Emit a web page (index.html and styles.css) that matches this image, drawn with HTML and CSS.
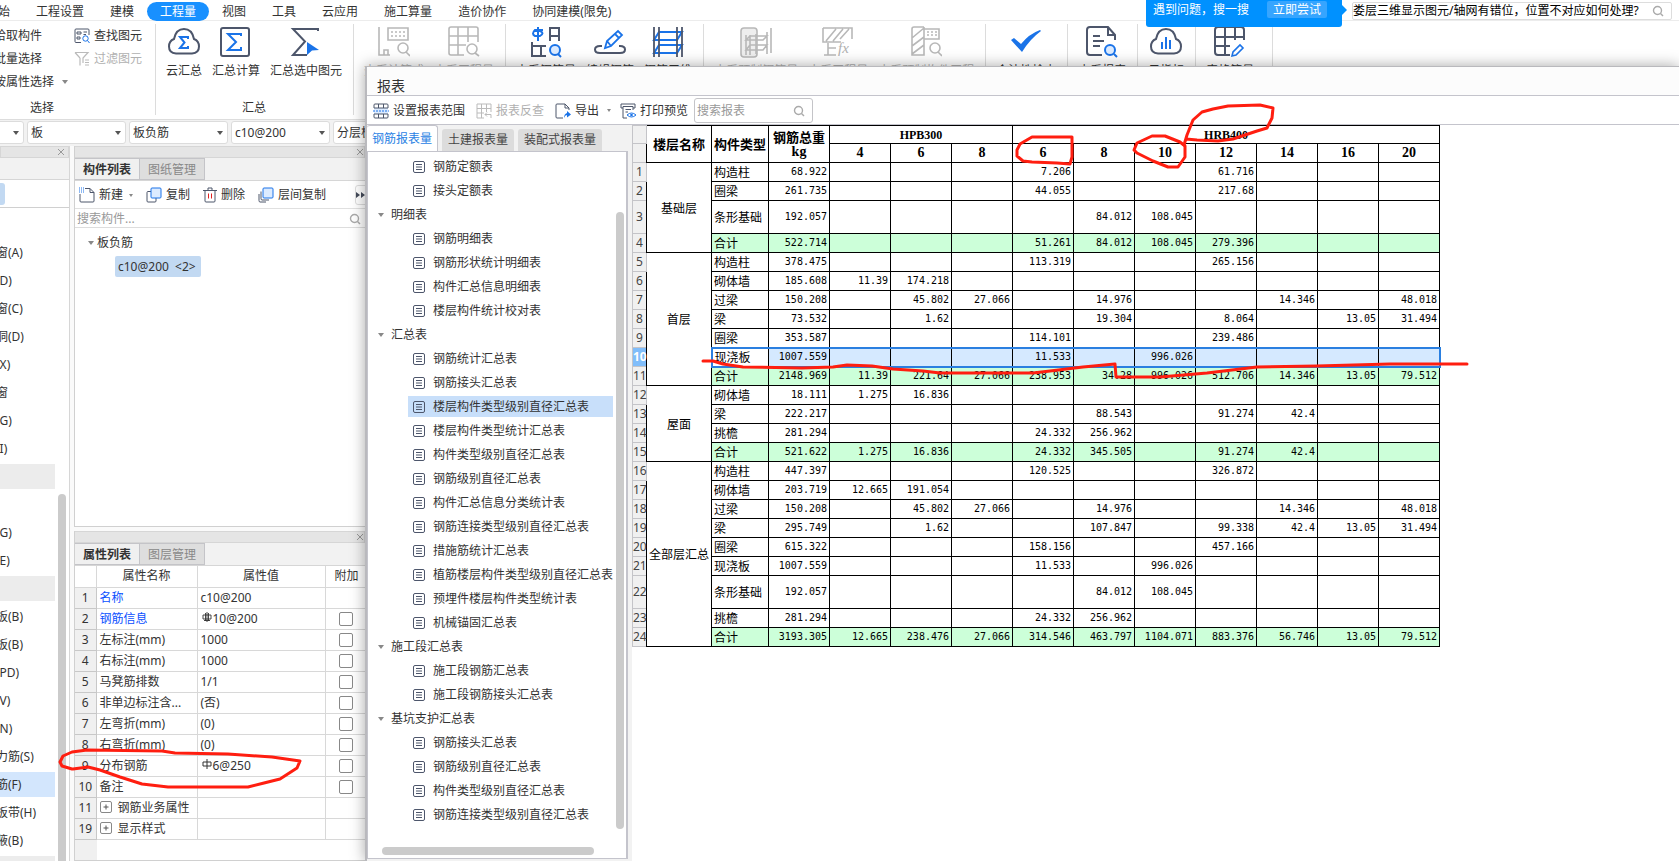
FILE: index.html
```
<!DOCTYPE html>
<html lang="zh-CN">
<head>
<meta charset="utf-8">
<title>报表</title>
<link rel="stylesheet" href="styles.css">
</head>
<body>
<svg class="defs" aria-hidden="true">
  <symbol id="i-doc" viewBox="0 0 12 12"><rect x=".5" y=".5" width="11" height="11" rx="1.5" fill="none" stroke="#4d566b"/><path d="M3 3.5h6M3 6h6M3 8.5h6" stroke="#4d566b" fill="none"/></symbol>
  <symbol id="i-search" viewBox="0 0 12 12"><circle cx="5.5" cy="5.5" r="4" fill="none" stroke="#aaa" stroke-width="1.4"/><path d="M8.5 8.5l2.5 2.5" stroke="#aaa" stroke-width="1.4"/></symbol>
  <symbol id="i-close" viewBox="0 0 8 8"><path d="M1 1l6 6M7 1L1 7" stroke="#999" fill="none"/></symbol>
  <symbol id="i-plus" viewBox="0 0 12 12"><rect x=".5" y=".5" width="11" height="11" rx="1.5" fill="#fff" stroke="#888"/><path d="M3.500 6h5M6 3.500v5" stroke="#555" fill="none"/></symbol>
</svg>
<div class="app">
  <header class="topbar">
    <nav class="menu">
      <button>开始</button><button>工程设置</button><button>建模</button><button class="active">工程量</button><button>视图</button><button>工具</button><button>云应用</button><button>施工算量</button><button>造价协作</button><button>协同建模(限免)</button>
    </nav>
    <div class="help">
      <div class="tip"><span>遇到问题，搜一搜</span><button>立即尝试</button></div>
      <label class="ask"><input type="text" aria-label="搜索问题" value="娄层三维显示图元/轴网有错位，位置不对应如何处理?"><svg width="12" height="12"><use href="#i-search"/></svg></label>
    </div>
  </header>

  <section class="ribbon">
    <div class="group select-group">
      <div class="cols">
        <div class="stack first"><button>拾取构件</button><button>批量选择</button><button>按属性选择<i class="caret"></i></button></div>
        <div class="stack">
          <button><svg width="16" height="16" viewBox="0 0 16 16" fill="none" stroke="#4d566b"><path d="M7 14.500H2Q1 14.500 1 13.500V2Q1 1 2 1H14Q15 1 15 2V7M3 4h4v2H3zM3 9h3v2H3zM9.500 4H13M9.500 6.500H12"/><g stroke="#1a73e8"><circle cx="11.500" cy="10.500" r="2.700"/><path d="M13.500 12.500l2 2.500"/></g></svg>查找图元</button>
          <button class="off"><svg width="16" height="16" viewBox="0 0 16 16" fill="none" stroke="#bbb" stroke-width="1.200"><path d="M1 1.500h13L9 7v5M6 7v7.500M1 1.500L6 7M11 9h4M11 11.500h4M11 14h4"/></svg>过滤图元</button>
        </div>
      </div>
      <span class="caption">选择</span>
    </div>
    <div class="group">
      <div class="cols">
        <button class="tool"><svg viewBox="0 0 32 32"><path d="M8 27.500Q1 27 1 20.500Q1 15 6 13Q8 3 16 3T26 13Q31 15 31 20.500Q31 27 24 27.500Z" fill="none" stroke="#4d566b" stroke-width="2"/><path d="M20 13v-2h-8l4.500 5.500L12 22h8v-2" fill="none" stroke="#1a73e8" stroke-width="2"/></svg>云汇总</button>
        <button class="tool"><svg viewBox="0 0 32 32"><rect x="1" y="2" width="28" height="28" rx="2" fill="none" stroke="#4d566b" stroke-width="2"/><path d="M21 10V8H8l8 8-8 8h13v-3" fill="none" stroke="#1a73e8" stroke-width="2"/></svg>汇总计算</button>
        <button class="tool"><svg viewBox="0 0 32 32"><path d="M28 5V3H3l12 12.500L3 29h14" fill="none" stroke="#4d566b" stroke-width="2"/><path d="M17 16l12 8-7 .5-5 4.500z" fill="#1a73e8"/></svg>汇总选中图元</button>
      </div>
      <span class="caption">汇总</span>
    </div>
    <div class="group">
      <div class="cols">
        <button class="tool off"><svg viewBox="0 0 32 32" fill="none" stroke="#b8b8b8" stroke-width="1.600"><path d="M1 1v28h9v-5H6v5M10 2h20v12H10zM10 29h2"/><path d="M13 6h15M13 10h15" stroke-dasharray="2 2"/><circle cx="25" cy="22" r="5"/><path d="M28 26l4 4"/></svg>查看计算式</button>
        <button class="tool off"><svg viewBox="0 0 32 32" fill="none" stroke="#b8b8b8" stroke-width="1.600"><path d="M16 29H3Q1 29 1 27V3Q1 1 3 1H28Q30 1 30 3V16M1 10h29M1 19h17M10 1v28M20 1v15"/><circle cx="24" cy="23" r="5"/><path d="M27 27l4 3"/></svg>查看工程量</button>
      </div>
    </div>
    <div class="group">
      <div class="cols">
        <button class="tool"><svg viewBox="0 0 32 32" fill="none" stroke="#4d566b" stroke-width="2"><path d="M20 15V2h9v13M20 10h9M2 16v14h14M2 20h14M11 20v10"/><g stroke="#1a73e8"><path d="M8 1v14M13 4H5Q1 8 5 10h5Q15 7 10 5H5"/><circle cx="25" cy="24" r="5" fill="#dcebff"/><path d="M28 28l3 3"/></g></svg>查看钢筋量</button>
        <button class="tool"><svg viewBox="0 0 32 32" fill="none"><path d="M8 20H6Q1 20 1 23.500T6 27H26Q31 27 31 23.500T26 20H25" stroke="#4d566b" stroke-width="2"/><path d="M11 22l2-7L24 5l4 4-11 11zM13 15l4 5M21 8l4 4" stroke="#1a73e8" stroke-width="1.800"/></svg>编辑钢筋</button>
        <button class="tool"><svg viewBox="0 0 32 32" fill="none"><g stroke="#1a73e8" stroke-width="2"><path d="M7 6h23l-5 8H2zM7 19h23l-5 8H2z"/></g><path d="M2 1v30M7 1v30M25 1v30M30 1v30" stroke="#4d566b" stroke-width="1.800"/></svg>钢筋三维</button>
      </div>
    </div>
    <div class="group">
      <div class="cols">
        <button class="tool off"><svg viewBox="0 0 32 32" fill="none" stroke="#b8b8b8" stroke-width="1.600"><rect x="1" y="2" width="16" height="29" rx="3" fill="#eee"/><path d="M6 9v20M10 9v20M16 8v20M27 6v22M31 2v25M10 10h17l-4 4H6zM10 19h17l-4 5H6z"/></svg>查看预制钢筋量</button>
        <button class="tool off"><svg viewBox="0 0 32 32" fill="none" stroke="#b8b8b8" stroke-width="1.600"><path d="M1 2h29v11M1 2v14h18M4 15L14 3M11 15L21 3M18 13l9-10M6 17v12M2 29h12M6 22h8"/><text x="16" y="27" font-family="Liberation Serif" font-style="italic" font-size="15" fill="#b0b0b0" stroke="none">fx</text></svg>查看工程量</button>
        <button class="tool off"><svg viewBox="0 0 32 32" fill="none" stroke="#b8b8b8" stroke-width="1.600"><path d="M14 1H4Q2 1 2 3V29H14V1M2 12L14 2M2 20l12-9M2 28l12-9M14 3h15v10H14z"/><path d="M17 6h10M17 9h10" stroke-dasharray="2 2"/><circle cx="25" cy="22" r="5"/><path d="M28 26l4 4"/></svg>查看预制构件工程</button>
      </div>
    </div>
    <div class="group"><div class="cols">
      <button class="tool"><svg viewBox="0 0 32 32"><path d="M1 14l3-2 7 6Q19 8 30 4l1 1Q20 13 12 26z" fill="#1a73e8"/></svg>合法性检查</button>
    </div></div>
    <div class="group"><div class="cols">
      <button class="tool"><svg viewBox="0 0 32 32" fill="none" stroke="#4d566b" stroke-width="2"><path d="M16 29H4Q1 29 1 26V4Q1 1 4 1H22l7 8v5M22 1v8h7M7 10h7M7 15h11M7 20h7"/><g stroke="#1a73e8"><circle cx="24" cy="24" r="5" fill="#dcebff"/><path d="M28 28l3 3"/></g></svg>查看报表</button>
    </div></div>
    <div class="group"><div class="cols">
      <button class="tool"><svg viewBox="0 0 32 32" fill="none"><path d="M8 27.500Q1 27 1 20.500Q1 15 6 13Q8 3 16 3T26 13Q31 15 31 20.500Q31 27 24 27.500Z" stroke="#4d566b" stroke-width="2"/><path d="M12 16v7M16 11v12M20 14v9" stroke="#1a73e8" stroke-width="2"/></svg>云指标</button>
    </div></div>
    <div class="group wide"><div class="cols">
      <button class="tool"><svg viewBox="0 0 32 32" fill="none"><path d="M16 29H4Q1 29 1 26V4Q1 1 4 1H27Q30 1 30 4V14M1 11h29M1 20h15M11 1v28M21 1v13" stroke="#4d566b" stroke-width="2"/><path d="M18 30l1-4 7-7 3 3-7 7z" stroke="#1a73e8" stroke-width="1.600"/></svg>表格算量</button>
    </div></div>
  </section>

  <div class="combos">
    <span class="combo"><select aria-label="楼层"><option>首层</option></select></span>
    <span class="combo"><select aria-label="构件大类"><option>板</option></select></span>
    <span class="combo"><select aria-label="构件类型"><option>板负筋</option></select></span>
    <span class="combo"><select aria-label="构件"><option>c10@200</option></select></span>
    <span class="combo"><select aria-label="分层"><option>分层板1</option></select></span>
  </div>

  <div class="work">
    <aside class="modules">
      <div class="strip"><svg width="8" height="8"><use href="#i-close"/></svg></div>
      <div class="bar"></div>
      <div class="tools"><i></i></div>
      <div class="list-wrap">
        <ul class="list">
          <li></li><li>门联窗(A)</li><li>墙洞(D)</li><li>带形窗(C)</li><li>带形洞(D)</li><li>飘窗(X)</li><li>老虎窗</li><li>过梁(G)</li><li>壁龛(I)</li>
          <li class="head"></li><li></li><li>连梁(G)</li><li>圈梁(E)</li>
          <li class="head"></li><li>现浇板(B)</li><li>螺旋板(B)</li><li>坡道(PD)</li><li>柱帽(V)</li><li>板洞(N)</li><li>板受力筋(S)</li><li class="sel">板负筋(F)</li><li>楼层板带(H)</li><li>板加腋(B)</li><li class="head"></li>
        </ul>
        <div class="scroll"></div>
      </div>
    </aside>
    <div class="panels">
      <section class="panel">
        <div class="strip"><svg width="8" height="8"><use href="#i-close"/></svg></div>
        <div class="tabs"><button class="on">构件列表</button><button>图纸管理</button></div>
        <div class="actions">
          <button><svg width="16" height="16" viewBox="0 0 16 16" fill="none"><path d="M6 1.500h5l4 4V14Q15 15 14 15H2Q1 15 1 14V7M11 1.500v4h4" stroke="#4d566b"/><path d="M0 1h5M0 3h5M0 5h5" stroke="#1a73e8" stroke-dasharray="1 1"/></svg>新建<i class="caret"></i></button>
          <button><svg width="16" height="16" viewBox="0 0 16 16" fill="none"><path d="M5 4.500H2Q1 4.500 1 5.500V14Q1 15 2 15H9Q10 15 10 14V11" stroke="#4d566b"/><rect x="5" y="1" width="10" height="10" rx="1" fill="#dcebff" stroke="#1a73e8"/></svg>复制</button>
          <button><svg width="14" height="16" viewBox="0 0 14 16" fill="none" stroke="#4d566b"><path d="M0 3.500h14M5 3V1h4v2M2 3.500V14q0 1 1 1h8q1 0 1-1V3.500"/><path d="M5.500 6.500v5M8.500 6.500v5" stroke="#e02020"/></svg>删除</button>
          <button><svg width="16" height="16" viewBox="0 0 16 16" fill="none"><path d="M3 4.500v7Q3 13 4 13h7M1 7v6.500Q1 15 2 15h6" stroke="#4d566b"/><rect x="5" y="1" width="10" height="10" rx="1" fill="#dcebff" stroke="#1a73e8"/></svg>层间复制</button>
          <button class="more" aria-label="更多"><svg width="10" height="8" viewBox="0 0 10 8"><path d="M0 1l4 3-4 3zM5 1l4 3-4 3z" fill="#444b5a"/></svg></button>
        </div>
        <label class="find"><input type="text" aria-label="搜索构件" placeholder="搜索构件..."><svg width="12" height="12"><use href="#i-search"/></svg></label>
        <div class="comp"><div class="parent"><i class="caret"></i>板负筋</div><div class="child">c10@200&nbsp; &lt;2&gt;</div></div>
      </section>
      <section class="panel">
        <div class="strip"><svg width="8" height="8"><use href="#i-close"/></svg></div>
        <div class="tabs"><button class="on">属性列表</button><button>图层管理</button></div>
        <div class="props-wrap">
        <table class="props">
          <colgroup><col class="p0"><col class="p1"><col class="p2"><col class="p3"></colgroup>
          <tr><th class="blank"></th><th>属性名称</th><th>属性值</th><th>附加</th></tr>
          <tr><th>1</th><td class="link">名称</td><td>c10@200</td><td></td></tr>
          <tr><th>2</th><td class="link">钢筋信息</td><td><svg class="bar-sign" width="10" height="10" viewBox="0 0 10 10"><path d="M1 3h8v4H1zM3.500 1v8M6.500 1v8M5 0v10M2 8.500h6" fill="none" stroke="#333" stroke-width=".9"/></svg>10@200</td><td><input type="checkbox" aria-label="附加 钢筋信息"></td></tr>
          <tr><th>3</th><td>左标注(mm)</td><td>1000</td><td><input type="checkbox" aria-label="附加 左标注"></td></tr>
          <tr><th>4</th><td>右标注(mm)</td><td>1000</td><td><input type="checkbox" aria-label="附加 右标注"></td></tr>
          <tr><th>5</th><td>马凳筋排数</td><td>1/1</td><td><input type="checkbox" aria-label="附加 马凳筋排数"></td></tr>
          <tr><th>6</th><td>非单边标注含...</td><td>(否)</td><td><input type="checkbox" aria-label="附加 非单边标注"></td></tr>
          <tr><th>7</th><td>左弯折(mm)</td><td>(0)</td><td><input type="checkbox" aria-label="附加 左弯折"></td></tr>
          <tr><th>8</th><td>右弯折(mm)</td><td>(0)</td><td><input type="checkbox" aria-label="附加 右弯折"></td></tr>
          <tr><th>9</th><td>分布钢筋</td><td><svg class="bar-sign" width="10" height="10" viewBox="0 0 10 10"><path d="M1 3h8v4H1zM5 0v10" fill="none" stroke="#333"/></svg>6@250</td><td><input type="checkbox" aria-label="附加 分布钢筋"></td></tr>
          <tr><th>10</th><td>备注</td><td></td><td><input type="checkbox" aria-label="附加 备注"></td></tr>
          <tr><th>11</th><td class="fold"><svg width="12" height="12"><use href="#i-plus"/></svg>钢筋业务属性</td><td></td><td></td></tr>
          <tr><th>19</th><td class="fold"><svg width="12" height="12"><use href="#i-plus"/></svg>显示样式</td><td></td><td></td></tr>
        </table>
        </div>
      </section>
    </div>
  </div>

  <section class="dialog" role="dialog" aria-label="报表">
    <h1>报表</h1>
    <div class="dtools">
      <button class="a"><svg width="16" height="16" viewBox="0 0 16 16" fill="none"><rect x="1" y="5" width="14" height="6" fill="#dcebff"/><path d="M1 5V2Q1 1 2 1H14Q15 1 15 2V5M1 11v3q0 1 1 1H14q1 0 1-1V11M5.500 1v4M10.500 1v4M5.500 11v4M10.500 11v4M1 5h14M1 11h14" stroke="#4d566b"/><path d="M0 8h16" stroke="#1a73e8" stroke-dasharray="2 1"/></svg>设置报表范围</button>
      <button class="b off"><svg width="16" height="16" viewBox="0 0 16 16" fill="none" stroke="#bbb"><path d="M8 15H1V1H15V9M1 5.500H15M1 10H8M5.500 1V15M10.500 1V9M15 15v-3.500H9M11 9.500l-2 2 2 2"/></svg>报表反查</button>
      <button class="c"><svg width="16" height="16" viewBox="0 0 16 16" fill="none"><path d="M14 7V5l-4-4H2Q1 1 1 2V14Q1 15 2 15H8M10 1v4h4" stroke="#4d566b"/><path d="M9 15q0-4 3-5V8l4 3.500-4 3V12q-2 0-3 3z" fill="#1a73e8"/></svg>导出<i class="caret"></i></button>
      <button class="d"><svg width="16" height="16" viewBox="0 0 16 16" fill="none"><path d="M3 5H1V1H15V5H13M3 3.500H13V7M3 3.500V15H7M5.500 6.500H11M5.500 9H8" stroke="#4d566b"/><path d="M7 12q4.500-4 9 0q-4.500 4-9 0z" fill="#fff" stroke="#1a73e8"/><circle cx="11.500" cy="12" r="1.300" fill="#1a73e8"/></svg>打印预览</button>
      <label class="dsearch"><input type="text" aria-label="搜索报表" placeholder="搜索报表"><svg width="12" height="12"><use href="#i-search"/></svg></label>
    </div>
    <div class="dbody">
      <div class="side">
        <div class="dtabs"><button class="on">钢筋报表量</button><button>土建报表量</button><button>装配式报表量</button></div>
        <div class="tree-box">
          <ul class="tree">
            <li><svg width="12" height="12"><use href="#i-doc"/></svg>钢筋定额表</li>
            <li><svg width="12" height="12"><use href="#i-doc"/></svg>接头定额表</li>
            <li class="g"><i class="caret"></i>明细表</li>
            <li><svg width="12" height="12"><use href="#i-doc"/></svg>钢筋明细表</li>
            <li><svg width="12" height="12"><use href="#i-doc"/></svg>钢筋形状统计明细表</li>
            <li><svg width="12" height="12"><use href="#i-doc"/></svg>构件汇总信息明细表</li>
            <li><svg width="12" height="12"><use href="#i-doc"/></svg>楼层构件统计校对表</li>
            <li class="g"><i class="caret"></i>汇总表</li>
            <li><svg width="12" height="12"><use href="#i-doc"/></svg>钢筋统计汇总表</li>
            <li><svg width="12" height="12"><use href="#i-doc"/></svg>钢筋接头汇总表</li>
            <li class="sel"><svg width="12" height="12"><use href="#i-doc"/></svg>楼层构件类型级别直径汇总表</li>
            <li><svg width="12" height="12"><use href="#i-doc"/></svg>楼层构件类型统计汇总表</li>
            <li><svg width="12" height="12"><use href="#i-doc"/></svg>构件类型级别直径汇总表</li>
            <li><svg width="12" height="12"><use href="#i-doc"/></svg>钢筋级别直径汇总表</li>
            <li><svg width="12" height="12"><use href="#i-doc"/></svg>构件汇总信息分类统计表</li>
            <li><svg width="12" height="12"><use href="#i-doc"/></svg>钢筋连接类型级别直径汇总表</li>
            <li><svg width="12" height="12"><use href="#i-doc"/></svg>措施筋统计汇总表</li>
            <li><svg width="12" height="12"><use href="#i-doc"/></svg>植筋楼层构件类型级别直径汇总表</li>
            <li><svg width="12" height="12"><use href="#i-doc"/></svg>预埋件楼层构件类型统计表</li>
            <li><svg width="12" height="12"><use href="#i-doc"/></svg>机械锚固汇总表</li>
            <li class="g"><i class="caret"></i>施工段汇总表</li>
            <li><svg width="12" height="12"><use href="#i-doc"/></svg>施工段钢筋汇总表</li>
            <li><svg width="12" height="12"><use href="#i-doc"/></svg>施工段钢筋接头汇总表</li>
            <li class="g"><i class="caret"></i>基坑支护汇总表</li>
            <li><svg width="12" height="12"><use href="#i-doc"/></svg>钢筋接头汇总表</li>
            <li><svg width="12" height="12"><use href="#i-doc"/></svg>钢筋级别直径汇总表</li>
            <li><svg width="12" height="12"><use href="#i-doc"/></svg>构件类型级别直径汇总表</li>
            <li><svg width="12" height="12"><use href="#i-doc"/></svg>钢筋连接类型级别直径汇总表</li>
          </ul>
          <div class="vbar"></div>
          <div class="hbar"></div>
        </div>
      </div>
      <div class="sheet">
        <table class="report">
          <colgroup><col class="c0"><col class="c1"><col class="c2"><col span="11" class="c3"></colgroup>
          <thead>
            <tr class="h1"><th class="n"></th><th rowspan="2">楼层名称</th><th rowspan="2">构件类型</th><th rowspan="2">钢筋总重<br><b class="unit">kg</b></th><th colspan="3" class="grade">HPB300</th><th colspan="7" class="grade">HRB400</th></tr>
            <tr class="dia"><th class="n"></th><th>4</th><th>6</th><th>8</th><th>6</th><th>8</th><th>10</th><th>12</th><th>14</th><th>16</th><th>20</th></tr>
          </thead>
          <tbody>
            <tr><th class="n">1</th><td class="f" rowspan="4">基础层</td><td class="t">构造柱<td>68.922<td><td><td><td>7.206<td><td><td>61.716<td><td><td></tr>
            <tr><th class="n">2</th><td class="t">圈梁<td>261.735<td><td><td><td>44.055<td><td><td>217.68<td><td><td></tr>
            <tr class="tall"><th class="n">3</th><td class="t">条形基础<td>192.057<td><td><td><td><td>84.012<td>108.045<td><td><td><td></tr>
            <tr class="sum"><th class="n">4</th><td class="t">合计<td>522.714<td><td><td><td>51.261<td>84.012<td>108.045<td>279.396<td><td><td></tr>
            <tr><th class="n">5</th><td class="f" rowspan="7">首层</td><td class="t">构造柱<td>378.475<td><td><td><td>113.319<td><td><td>265.156<td><td><td></tr>
            <tr><th class="n">6</th><td class="t">砌体墙<td>185.608<td>11.39<td>174.218<td><td><td><td><td><td><td><td></tr>
            <tr><th class="n">7</th><td class="t">过梁<td>150.208<td><td>45.802<td>27.066<td><td>14.976<td><td><td>14.346<td><td>48.018</tr>
            <tr><th class="n">8</th><td class="t">梁<td>73.532<td><td>1.62<td><td><td>19.304<td><td>8.064<td><td>13.05<td>31.494</tr>
            <tr><th class="n">9</th><td class="t">圈梁<td>353.587<td><td><td><td>114.101<td><td><td>239.486<td><td><td></tr>
            <tr class="picked"><th class="n">10</th><td class="t">现浇板<td>1007.559<td><td><td><td>11.533<td><td>996.026<td><td><td><td></tr>
            <tr class="sum"><th class="n">11</th><td class="t">合计<td>2148.969<td>11.39<td>221.64<td>27.066<td>238.953<td>34.28<td>996.026<td>512.706<td>14.346<td>13.05<td>79.512</tr>
            <tr><th class="n">12</th><td class="f" rowspan="4">屋面</td><td class="t">砌体墙<td>18.111<td>1.275<td>16.836<td><td><td><td><td><td><td><td></tr>
            <tr><th class="n">13</th><td class="t">梁<td>222.217<td><td><td><td><td>88.543<td><td>91.274<td>42.4<td><td></tr>
            <tr><th class="n">14</th><td class="t">挑檐<td>281.294<td><td><td><td>24.332<td>256.962<td><td><td><td><td></tr>
            <tr class="sum"><th class="n">15</th><td class="t">合计<td>521.622<td>1.275<td>16.836<td><td>24.332<td>345.505<td><td>91.274<td>42.4<td><td></tr>
            <tr><th class="n">16</th><td class="f" rowspan="9">全部层汇总</td><td class="t">构造柱<td>447.397<td><td><td><td>120.525<td><td><td>326.872<td><td><td></tr>
            <tr><th class="n">17</th><td class="t">砌体墙<td>203.719<td>12.665<td>191.054<td><td><td><td><td><td><td><td></tr>
            <tr><th class="n">18</th><td class="t">过梁<td>150.208<td><td>45.802<td>27.066<td><td>14.976<td><td><td>14.346<td><td>48.018</tr>
            <tr><th class="n">19</th><td class="t">梁<td>295.749<td><td>1.62<td><td><td>107.847<td><td>99.338<td>42.4<td>13.05<td>31.494</tr>
            <tr><th class="n">20</th><td class="t">圈梁<td>615.322<td><td><td><td>158.156<td><td><td>457.166<td><td><td></tr>
            <tr><th class="n">21</th><td class="t">现浇板<td>1007.559<td><td><td><td>11.533<td><td>996.026<td><td><td><td></tr>
            <tr class="tall"><th class="n">22</th><td class="t">条形基础<td>192.057<td><td><td><td><td>84.012<td>108.045<td><td><td><td></tr>
            <tr><th class="n">23</th><td class="t">挑檐<td>281.294<td><td><td><td>24.332<td>256.962<td><td><td><td><td></tr>
            <tr class="sum"><th class="n">24</th><td class="t">合计<td>3193.305<td>12.665<td>238.476<td>27.066<td>314.546<td>463.797<td>1104.071<td>883.376<td>56.746<td>13.05<td>79.512</tr>
          </tbody>
        </table>
      </div>
    </div>
  </section>

  <svg class="ink" width="1679" height="861" viewBox="0 0 1679 861" aria-hidden="true">
    <path d="M72 769L62 766L60 762L63 756L72 752L87 750L162 751L175 753L228 754L272 757L300 761L297 768L280 779L264 783L248 787L168 787L142 784L120 777L100 770L88 767L73 769"/>
    <path d="M1017 150L1020 144L1032 137L1048 137H1072V157L1070 164L1057 163L1032 162L1023 161L1017 156Z"/>
    <path d="M1134 150L1137 143L1152 136H1165L1180 142L1185 146V157L1178 167H1168L1153 161L1137 153Z"/>
    <path d="M1184 145L1187 135L1193 120L1202 112L1213 109L1228 106L1260 105L1273 108L1272 118L1267 128L1257 131L1233 139L1218 141L1197 140L1186 139"/>
    <path d="M703 361H713L723 364L743 367L802 368L833 367L847 365L872 366L893 369L923 371L940 373H1033L1050 371L1083 367L1115 364L1116 377H1160L1207 373L1257 367L1317 366L1390 364H1467"/>
  </svg>
</div>
</body>
</html>
```
FILE: styles.css
```
* { box-sizing: border-box; }
body {
  margin: 0;
  font: 12px/16px "Noto Sans", "Noto Sans CJK SC", sans-serif;
  color: #333;
  background: #fff;
}
button, input, select { font: inherit; color: inherit; }
button { border: 0; background: none; padding: 0; white-space: nowrap; }
input { border: 0; background: none; padding: 0; outline: 0; min-width: 0; }
ul { list-style: none; margin: 0; padding: 0; }
svg { flex: none; display: block; }
.defs { position: absolute; width: 0; height: 0; }
.caret {
  display: inline-block;
  flex: none;
  border: 3px solid transparent;
  border-top: 4px solid #888;
  border-bottom: 0;
}

.app { position: relative; height: 100vh; overflow: hidden; display: flex; flex-direction: column; }

/* menu bar */
.topbar { flex: none; height: 21px; display: flex; justify-content: space-between; border-bottom: 1px solid #ececec; }
.menu { display: flex; margin-left: -27px; padding-top: 2px; }
.menu button { padding: 0 13px; height: 19px; line-height: 19px; }
.menu .active { background: #1890ff; color: #fff; border-radius: 10px; }
.help { display: flex; gap: 10px; padding-right: 7px; align-items: flex-start; position: relative; z-index: 1; }
.tip { display: flex; gap: 18px; height: 27px; width: 196px; padding: 1px 14px 0 7px; background: #0091ff; color: #fff; border-radius: 0 0 3px 3px; position: relative; line-height: 18px; }
.tip::after { content: ""; position: absolute; left: 100%; top: 5px; border: 5px solid transparent; border-left-color: #0091ff; border-right: 0; }
.tip button { background: #36a5ff; border-radius: 2px; padding: 0 6px; height: 17px; line-height: 17px; }
.ask { display: flex; align-items: center; width: 320px; height: 18px; margin-top: 2px; border: 1px solid #ddd; border-radius: 2px; padding: 0 7px 0 0; background: #fff; color: #000; }
.ask input { flex: 1; }

/* ribbon */
.ribbon { flex: none; height: 99px; display: flex; padding-top: 3px; border-bottom: 1px solid #ddd; }
.group { display: flex; flex-direction: column; justify-content: space-between; padding: 0 12px 3px 10px; position: relative; }
.group::after { content: ""; position: absolute; right: 0; top: 0; bottom: 4px; width: 1px; background: #dcdcdc; }
.group .cols { display: flex; gap: 10px; }
.select-group { width: 156px; padding: 0 0 3px; }
.select-group .cols { gap: 19px; }
.select-group .caption { padding-right: 72px; }
.wide { padding-right: 19px; }
.caption { text-align: center; }
.stack { display: flex; flex-direction: column; align-items: flex-start; gap: 7px; padding-top: 4px; }
.stack button { display: flex; align-items: center; gap: 4px; height: 16px; }
.stack .caret { margin-left: 4px; }
.stack.first { margin-left: -6px; width: 61px; }
.tool { display: flex; flex-direction: column; align-items: center; gap: 5px; padding-top: 2px; }
.tool svg { width: 32px; height: 32px; }
.off { color: #b0b0b0; }

/* combo row */
.combos { flex: none; height: 26px; display: flex; gap: 3px; padding: 1px 0 0; margin-left: -75px; background: #f2f2f2; }
.combo { position: relative; width: 99px; height: 23px; flex: none; }
.combo select { appearance: none; width: 100%; height: 100%; border: 1px solid #dcdcdc; border-radius: 3px; background: #fff; padding: 0 3px; }
.combo::after { content: ""; position: absolute; right: 5px; top: 10px; border: 3px solid transparent; border-top: 4px solid #555; border-bottom: 0; }

/* work area */
.work { flex: 1; min-height: 0; display: flex; gap: 4px; background: #fafafa; }
.strip { flex: none; height: 12px; background: #e5e5e5; border: 1px solid #d6d6d6; display: flex; align-items: center; justify-content: flex-end; padding-right: 3px; }
.modules { width: 70px; flex: none; overflow: hidden; background: #fff; border-right: 1px solid #d6d6d6; display: flex; flex-direction: column; }
.modules .bar { flex: none; height: 22px; background: #f2f2f2; border-bottom: 1px solid #d6d6d6; }
.modules .tools { flex: none; height: 28px; border-bottom: 1px solid #d0d0d0; padding-top: 3px; }
.modules .tools i { display: block; width: 5px; height: 22px; background: #c2d9f2; border-radius: 0 3px 3px 0; }
.list-wrap { flex: 1; min-height: 0; display: flex; gap: 3px; padding-top: 4px; }
.list { width: 55px; flex: none; overflow: hidden; }
.list li { height: 25px; margin-bottom: 3px; line-height: 25px; text-indent: -28px; white-space: nowrap; }
.list .head { background: #ececec; }
.list .sel { background: #d3e6fd; }
.scroll { width: 8px; margin-top: 282px; background: #cbcbcb; border-radius: 4px 4px 0 0; }
.panels { width: 291px; flex: none; display: grid; grid-template-rows: 381px 1fr; gap: 4px; }
.panel { min-width: 0; min-height: 0; display: flex; flex-direction: column; background: #fff; border: solid #d0d0d0; border-width: 0 0 1px 1px; }
.panel .strip { padding-right: 0; border-left: 0; }
.tabs { flex: none; display: flex; height: 23px; background: #f2f2f2; border-bottom: 1px solid #d6d6d6; }
.tabs button { width: 65px; padding-top: 1px; border: 1px solid #c4c4c8; border-left: 0; background: #dedede; color: #888; }
.tabs .on { background: #f0f0f0; color: #333; font-weight: bold; }
.actions { flex: none; height: 28px; display: flex; align-items: center; padding: 1px 0 0 4px; gap: 13px; border-bottom: 1px solid #e0e0e0; overflow: hidden; }
.actions button { display: flex; align-items: center; gap: 4px; flex: none; }
.actions .caret { margin-left: 2px; border-width: 3px 2px 0; }
.actions .more { width: 16px; height: 20px; margin-left: 16px; border: 1px solid #ddd; border-radius: 3px; }
.find { flex: none; display: flex; align-items: center; height: 19px; border-bottom: 1px solid #ddd; padding: 1px 4px 0 2px; }
.find input { flex: 1; }
::placeholder { color: #999; opacity: 1; }
.comp { padding: 7px 0 0 13px; }
.parent { display: flex; align-items: center; gap: 3px; }
.child { display: inline-block; margin: 5px 0 0 27px; padding: 3px 5px 2px 3px; background: #c2d9f2; border-radius: 2px; }
.props-wrap { flex: 1; overflow: hidden; background: linear-gradient(to right, #f0f0f0 22px, #fff 22px); }
.props { table-layout: fixed; width: 293px; border-collapse: collapse; background: #fff; }
.p0 { width: 21px; } .p1 { width: 101px; } .p2 { width: 128px; } .p3 { width: 43px; }
.props tr { height: 21px; }
.props th, .props td { border: 1px solid #d8d8d8; border-width: 0 1px 1px 0; padding: 0 3px; font-weight: normal; text-align: left; white-space: nowrap; }
.props th { text-align: center; padding: 0; }
.props tr + tr th { background: #f0f0f0; border-color: #c8c8c8; }
.props td:last-child { text-align: center; padding: 0; }
.props .link { color: #0b50ff; }
.bar-sign { display: inline-block; margin: 0 1px 4px; vertical-align: middle; }
.fold svg { display: inline-block; vertical-align: middle; margin: 0 6px 2px 0; }
.props input { appearance: none; display: block; width: 14px; height: 14px; margin: 0 13px; border: 1px solid #888; border-radius: 2px; background: #fff; }

/* report dialog */
.dialog { position: absolute; left: 365px; top: 66px; right: 0; bottom: 0; display: flex; flex-direction: column; background: #fff; border: solid #b9b9bd; border-width: 1px 0 0 2px; box-shadow: 0 0 14px rgba(0, 0, 0, .35); }
.dialog h1 { margin: 0; flex: none; height: 29px; padding: 9px 10px 0; font-size: 14px; line-height: 20px; font-weight: normal; background: #fcfcfc; border-bottom: 1px solid #c4c4cc; }
.dtools { flex: none; height: 29px; display: flex; align-items: center; padding: 1px 0 0 6px; border-bottom: 1px solid #c4c4cc; }
.dtools button { display: flex; align-items: center; gap: 4px; margin-right: 11px; }
.dtools .c { margin-right: 9px; }
.dtools .caret { margin: 0 0 0 4px; border-width: 3px 2px 0; }
.dtools .d { margin-right: 6px; }
.dsearch { display: flex; align-items: center; width: 119px; height: 25px; padding: 0 7px 0 2px; border: 1px solid #c4c4c8; border-radius: 3px; }
.dsearch input { flex: 1; }
.dbody { flex: 1; min-height: 0; display: flex; background: #f2f2f2; }
.side { width: 261px; flex: none; display: flex; flex-direction: column; }
.dtabs { flex: none; height: 26px; display: flex; align-items: flex-end; gap: 4px; }
.dtabs button { height: 22px; padding: 0 6px; background: #dcdcdc; color: #444; border-radius: 3px 3px 0 0; }
.dtabs .on { height: 26px; padding: 0 5px; background: #fff; color: #2a82e4; border: solid #c4c4cc; border-width: 1px 1px 0 0; }
.tree-box { flex: 1; min-height: 0; margin-bottom: 2px; background: #fff; border: 2px solid #c4c4cc; border-width: 1px 2px 1px 1px; display: grid; grid-template-columns: 1fr 8px; grid-template-rows: 1fr 8px; padding: 4px 3px 3px 0; }
.tree { min-height: 0; }
.tree li { display: flex; align-items: center; gap: 8px; height: 21px; margin: 0 3px 3px 40px; padding-left: 5px; white-space: nowrap; }
.tree .g { padding-left: 0; margin-left: 10px; gap: 7px; }
.tree .sel { background: #c8dffa; }
.vbar { margin: 56px 0 18px; background: #cbcbcb; border-radius: 4px; }
.hbar { margin: 0 22px 0 14px; background: #cbcbcb; border-radius: 4px; }
.sheet { flex: 1; margin-left: 4px; background: #fff; overflow: hidden; }
.report { table-layout: fixed; width: 807px; border-collapse: collapse; color: #000; }
.c0 { width: 14px; } .c1 { width: 65px; } .c2 { width: 57px; } .c3 { width: 61px; }
.report tr { height: 19px; }
.report .h1 { height: 18px; }
.report .tall { height: 33px; }
.report th, .report td { border: 1px solid #000; padding: 0; line-height: 14px; white-space: nowrap; }
.report th { font-size: 13px; }
.report .dia th, .report .unit { font: bold 14px/14px "Liberation Serif", serif; }
.report .grade { font: bold 12px/14px "Liberation Serif", serif; }
.report td { font: 10px/14px "DejaVu Sans Mono", monospace; text-align: right; padding-right: 2px; }
.report .t { font: 12px/14px "Noto Sans CJK SC", sans-serif; text-align: left; padding-left: 2px; }
.report .f { font: 12px/14px "Noto Sans CJK SC", sans-serif; text-align: center; padding: 0; }
.report th.n { font: 12px/14px "Noto Sans", sans-serif; color: #444; background: #f0f0f0; border-color: #c4c4c8; }
.report .sum td:not(.f) { background: #ccffd9; }
.report .picked td { background: #d5e9ff; border-top: 2px solid #2a7fe0; border-bottom: 2px solid #2a7fe0; }
.report .picked .t { background: #fff; border-left: 2px solid #2a7fe0; }
.report .picked td:last-child { border-right: 2px solid #2a7fe0; }
.report .picked th.n { background: #80bdfa; color: #fff; font-weight: bold; }

/* pen marks */
.ink { position: absolute; left: 0; top: 0; fill: none; stroke: #ff1e10; stroke-width: 3; stroke-linejoin: round; stroke-linecap: round; pointer-events: none; }
```
